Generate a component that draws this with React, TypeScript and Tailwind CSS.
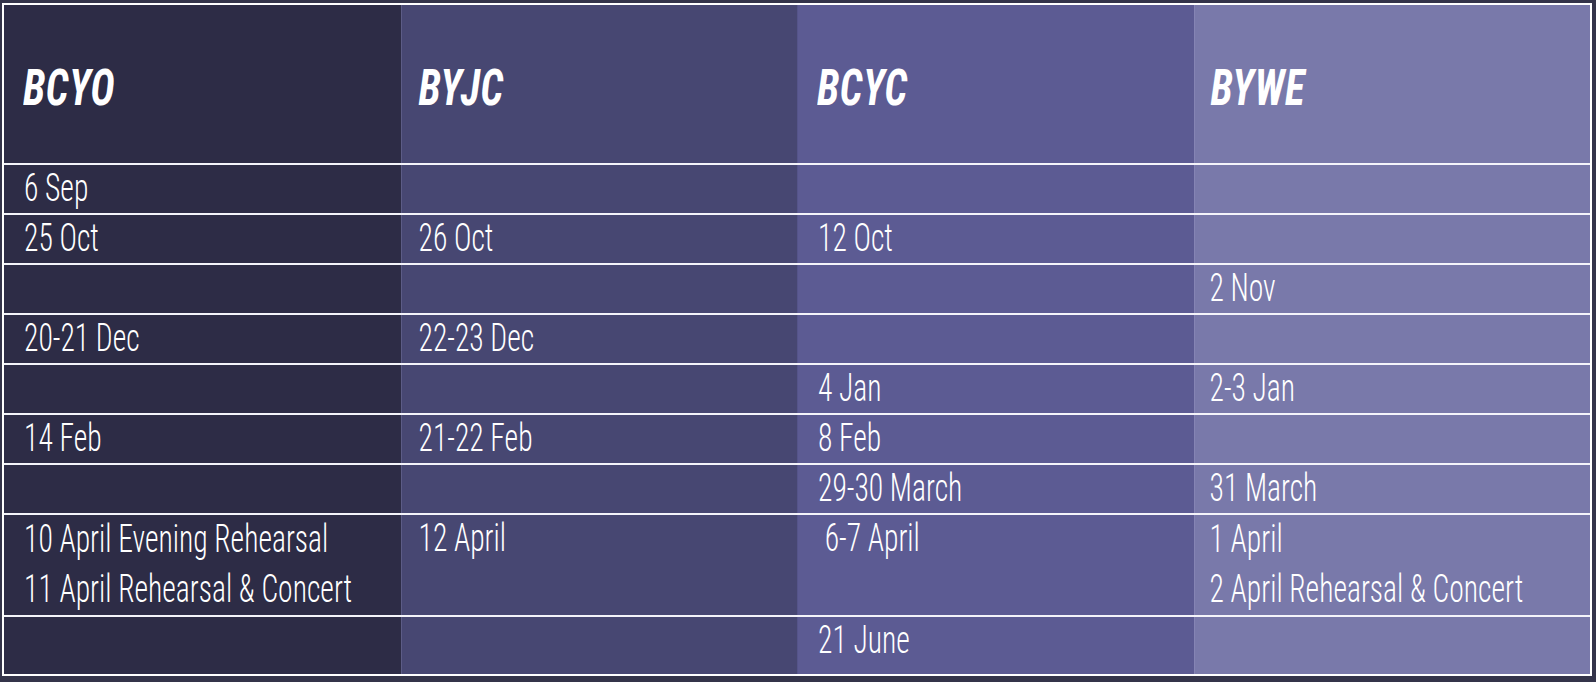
const cols = [
  'bg-[#2d2c46] pl-[20px]',
  'bg-[#474772] border-l border-[#5c5c86] pl-[17px]',
  'bg-[#5c5b93] border-l border-[#55548a] pl-[20px]',
  'bg-[#7979aa] border-l border-[#8584b4] pl-[15px]',
];

const headCols = [
  'bg-[#2d2c46] pl-[19px]',
  'bg-[#474772] border-l border-[#5c5c86] pl-[17px]',
  'bg-[#5c5b93] border-l border-[#55548a] pl-[19px]',
  'bg-[#7979aa] border-l border-[#8584b4] pl-[16px]',
];

type Row = { cells: string[][]; h: string };

const rows: Row[] = [
  { cells: [['6 Sep'], [], [], []], h: 'h-[50px]' },
  { cells: [['25 Oct'], ['26 Oct'], ['12 Oct'], []], h: 'h-[50px]' },
  { cells: [[], [], [], ['2 Nov']], h: 'h-[50px]' },
  { cells: [['20-21 Dec'], ['22-23 Dec'], [], []], h: 'h-[50px]' },
  { cells: [[], [], ['4 Jan'], ['2-3 Jan']], h: 'h-[50px]' },
  { cells: [['14 Feb'], ['21-22 Feb'], ['8 Feb'], []], h: 'h-[50px]' },
  { cells: [[], [], ['29-30 March'], ['31 March']], h: 'h-[50px]' },
  {
    cells: [
      ['10 April Evening Rehearsal', '11 April Rehearsal & Concert'],
      ['12 April'],
      [' 6-7 April'],
      ['1 April', '2 April Rehearsal & Concert'],
    ],
    h: 'h-[102px]',
  },
  { cells: [[], [], ['21 June'], []], h: 'h-[57px]' },
];

const headers = ['BCYO', 'BYJC', 'BCYC', 'BYWE'];

export default function App() {
  return (
    <div className="w-[1596px] h-[682px] bg-[#34344a] pt-[3px] pl-[2px] font-['Roboto_Condensed','Liberation_Sans',sans-serif] text-white">
      <div className="w-[1590px] border-2 border-white bg-white">
        <div className="grid grid-cols-4 h-[160px] border-b-2 border-[#f4f4fa]">
          {headers.map((t, i) => (
            <div key={t} className={`${headCols[i]} flex items-center pt-[8px]`}>
              <span className="inline-block scale-y-[1.22] origin-center text-[41px] leading-none font-bold italic tracking-[0.5px]">
                {t}
              </span>
            </div>
          ))}
        </div>
        {rows.map((r, ri) => (
          <div
            key={ri}
            className={`grid grid-cols-4 overflow-hidden ${r.h} ${ri < rows.length - 1 ? 'border-b-2 border-[#f4f4fa]' : ''}`}
          >
            {r.cells.map((lines, ci) => (
              <div key={ci} className={`${cols[ci]} flex flex-col`}>
                {lines.map((l, li) => (
                  <div key={li} className={`${lines.length > 1 ? 'h-[50px]' : 'h-[48px]'} flex items-center`}>
                    <span className="inline-block whitespace-pre scale-y-[1.3] origin-center text-[29.6px] leading-none font-light">
                      {l}
                    </span>
                  </div>
                ))}
              </div>
            ))}
          </div>
        ))}
      </div>
    </div>
  );
}
